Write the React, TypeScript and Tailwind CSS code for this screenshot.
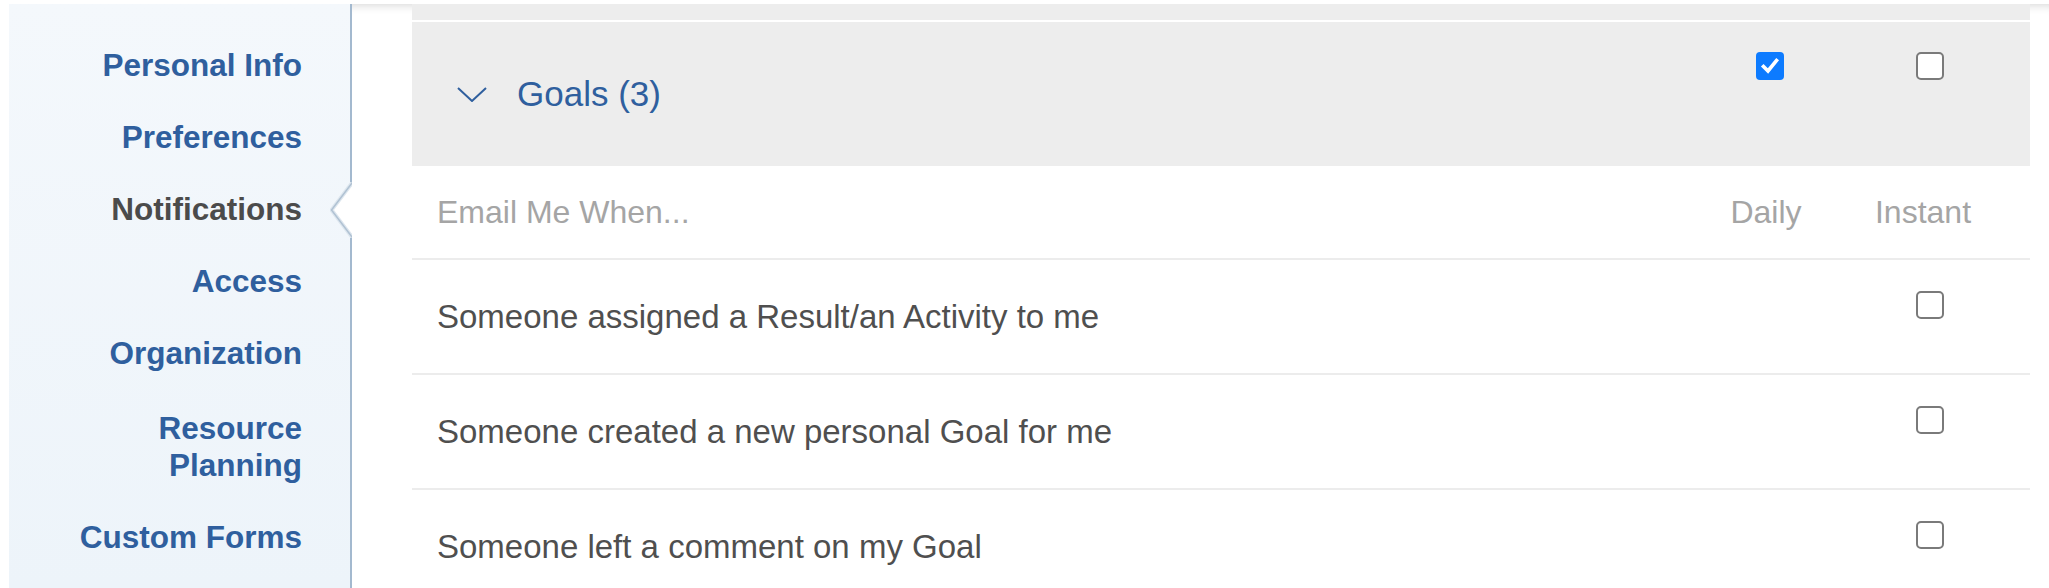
import React from 'react';

const navItems = [
  { label: 'Personal Info' },
  { label: 'Preferences' },
  { label: 'Notifications', active: true },
  { label: 'Access' },
  { label: 'Organization' },
  { label: 'Resource Planning', lines: ['Resource', 'Planning'] },
  { label: 'Custom Forms' },
];

const rows = [
  'Someone assigned a Result/an Activity to me',
  'Someone created a new personal Goal for me',
  'Someone left a comment on my Goal',
];

const Checkbox: React.FC<{ checked?: boolean }> = ({ checked }) =>
  checked ? (
    <span className="flex h-[28px] w-[28px] items-center justify-center rounded-[4px] bg-[#0d7bff]">
      <svg viewBox="0 0 28 28" className="h-[28px] w-[28px]">
        <path d="M7.5 14.5 L12 19 L20.5 8.5" fill="none" stroke="#fff" strokeWidth="3.6" strokeLinecap="square" />
      </svg>
    </span>
  ) : (
    <span className="block h-[28px] w-[28px] rounded-[5px] border-2 border-[#7a7a7a] bg-white" />
  );

export default function App() {
  return (
    <div className="flex h-[588px] overflow-hidden bg-white pl-[9px] pt-[4px] font-['Liberation_Sans',Arial,sans-serif]">
      {/* Sidebar */}
      <aside className="flex w-[343px] shrink-0 flex-col gap-[35px] border-r-2 border-[#a3b9cf] bg-linear-to-b from-[#f4f8fc] to-[#edf4fa] pt-[43px]">
        {navItems.map((item) => (
          <div
            key={item.label}
            className={`relative pr-[48px] text-right text-[31.5px] font-bold leading-[37px] ${
              item.active ? 'text-[#4b4b4b]' : 'text-[#2f5f9e]'
            } ${item.lines ? 'pt-[3px]' : ''}`}
          >
            {item.lines ? item.lines.map((l) => <div key={l}>{l}</div>) : item.label}
            {item.active && (
              <svg viewBox="0 0 22 56" className="absolute right-[-2px] top-1/2 h-[56px] w-[22px] -translate-y-1/2">
                <polygon points="22,0 1,28 22,56" fill="#fff" />
                <polyline points="22,1 1.5,28 22,55" fill="none" stroke="#dde6ee" strokeWidth="4" />
                <polyline points="22,1 1.5,28 22,55" fill="none" stroke="#b0c2d3" strokeWidth="1.5" />
              </svg>
            )}
          </div>
        ))}
      </aside>

      {/* Main panel */}
      <main className="flex-1 bg-white pl-[60px] pr-[19px] shadow-[inset_0_10px_8px_-8px_rgba(0,0,0,0.15)]">
        <div className="h-[16px] bg-[#ededed]" />

        <div className="mt-[2px] grid h-[144px] grid-cols-[1fr_160px_160px] bg-[#ededed] pr-[20px]">
          <div className="flex items-center gap-[30px] pl-[45px]">
            <svg viewBox="0 0 30 15" className="h-[15px] w-[30px]">
              <path d="M1 1 L15 14 L29 1" fill="none" stroke="#2f5f9e" strokeWidth="2" />
            </svg>
            <span className="text-[35px] text-[#2f5f9e]">Goals (3)</span>
          </div>
          <div className="flex justify-center pt-[30px]">
            <Checkbox checked />
          </div>
          <div className="flex justify-center pt-[30px]">
            <Checkbox />
          </div>
        </div>

        <div className="grid h-[94px] grid-cols-[1fr_160px_160px] items-center border-b-2 border-[#ececec] pr-[20px] text-[32px] text-[#a5a5a5]">
          <span className="pl-[25px]">Email Me When...</span>
          <span className="pr-[8px] text-center">Daily</span>
          <span className="pr-[14px] text-center">Instant</span>
        </div>

        {rows.map((r) => (
          <div key={r} className="grid h-[115px] grid-cols-[1fr_160px_160px] border-b-2 border-[#ececec] pr-[20px]">
            <div className="flex items-center pl-[25px] text-[33px] text-[#4f4f4f]">{r}</div>
            <div />
            <div className="flex justify-center pt-[31px]">
              <Checkbox />
            </div>
          </div>
        ))}
      </main>
    </div>
  );
}
